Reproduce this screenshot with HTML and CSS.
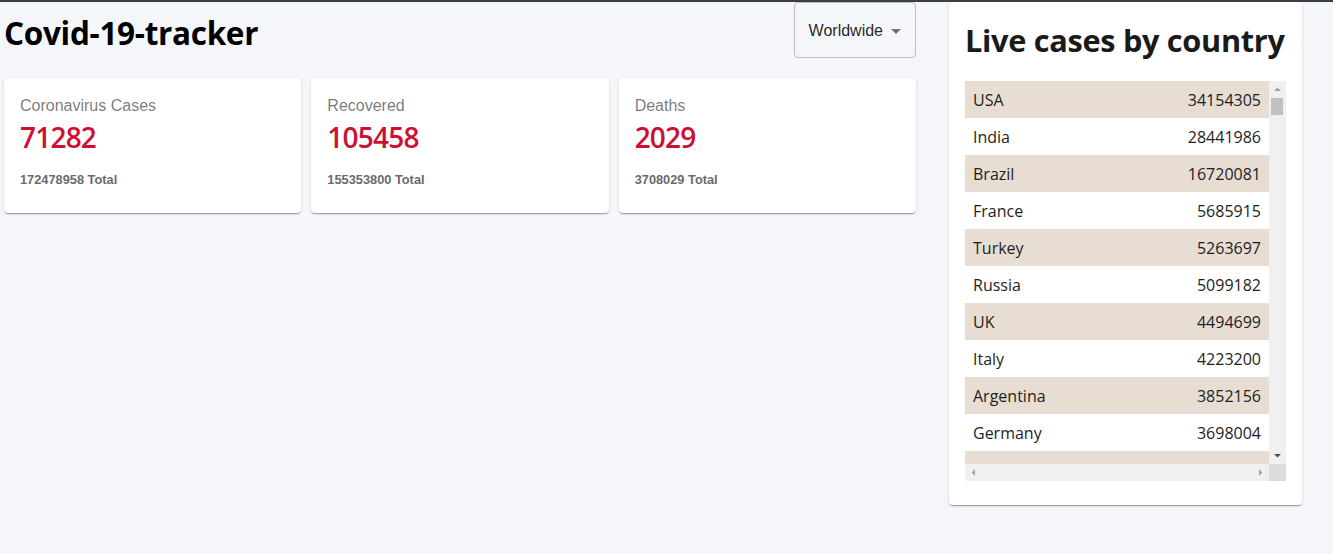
FILE: index.html
```html
<!DOCTYPE html>
<html lang="en">
<head>
<meta charset="utf-8">
<title>Covid-19-tracker</title>
<link rel="stylesheet" href="styles.css">
</head>
<body>
<div class="app">
  <div class="app-left">
    <div class="header">
      <h1 class="app-title">Covid-19-tracker</h1>
      <div class="select">
        <span class="select-value">Worldwide</span>
        <svg class="select-icon" viewBox="0 0 24 24" width="24" height="24"><path d="M7 10l5 5 5-5z"/></svg>
      </div>
    </div>
    <div class="stats">
      <div class="card info-box">
        <div class="info-title">Coronavirus Cases</div>
        <h2 class="info-cases">71282</h2>
        <div class="info-total">172478958 Total</div>
      </div>
      <div class="card info-box">
        <div class="info-title">Recovered</div>
        <h2 class="info-cases">105458</h2>
        <div class="info-total">155353800 Total</div>
      </div>
      <div class="card info-box">
        <div class="info-title">Deaths</div>
        <h2 class="info-cases">2029</h2>
        <div class="info-total">3708029 Total</div>
      </div>
    </div>
  </div>
  <div class="card app-right">
    <h3 class="right-title">Live cases by country</h3>
    <div class="table-wrap">
      <div class="table-view">
        <table class="table">
          <tbody>
            <tr><td>USA</td><td>34154305</td></tr>
            <tr><td>India</td><td>28441986</td></tr>
            <tr><td>Brazil</td><td>16720081</td></tr>
            <tr><td>France</td><td>5685915</td></tr>
            <tr><td>Turkey</td><td>5263697</td></tr>
            <tr><td>Russia</td><td>5099182</td></tr>
            <tr><td>UK</td><td>4494699</td></tr>
            <tr><td>Italy</td><td>4223200</td></tr>
            <tr><td>Argentina</td><td>3852156</td></tr>
            <tr><td>Germany</td><td>3698004</td></tr>
            <tr><td>Spain</td><td>3697980</td></tr>
            <tr><td>Colombia</td><td>3518046</td></tr>
          </tbody>
        </table>
      </div>
      <div class="vbar">
        <div class="sb-btn"><svg width="17" height="17" viewBox="0 0 17 17"><path d="M5 10h7L8.5 6.5z" fill="#a3a3a3"/></svg></div>
        <div class="vbar-track"><div class="vbar-thumb"></div></div>
        <div class="sb-btn"><svg width="17" height="17" viewBox="0 0 17 17"><path d="M5 7h7L8.5 10.5z" fill="#505050"/></svg></div>
      </div>
      <div class="hbar">
        <div class="sb-btn"><svg width="17" height="17" viewBox="0 0 17 17"><path d="M10 5v7L6.5 8.5z" fill="#a3a3a3"/></svg></div>
        <div class="hbar-track"></div>
        <div class="sb-btn"><svg width="17" height="17" viewBox="0 0 17 17"><path d="M7 5v7L10.5 8.5z" fill="#a3a3a3"/></svg></div>
      </div>
      <div class="sb-corner"></div>
    </div>
  </div>
</div>
</body>
</html>
```

FILE: styles.css
```css
* { box-sizing: border-box; }

html, body {
  margin: 0;
  height: 100%;
}

body {
  background: #f5f6fa;
  border-top: 2px solid #3a3f44;
  font-family: "Open Sans", "Noto Sans", sans-serif;
  overflow: hidden;
}

.app {
  display: flex;
  align-items: flex-start;
  gap: 33px;
  padding: 0 31px 0 4px;
}

.app-left {
  flex: 0 0 912px;
  min-width: 0;
}

.header {
  display: flex;
  justify-content: space-between;
  align-items: center;
  height: 56px;
  margin-bottom: 20px;
}

.app-title {
  margin: 0;
  font-size: 31.5px;
  font-weight: 700;
  letter-spacing: -0.3px;
  color: #000;
  line-height: 40px;
  padding-top: 5px;
}

.select {
  position: relative;
  display: flex;
  align-items: center;
  height: 56px;
  padding: 1px 32px 0 14px;
  border: 1px solid rgba(0, 0, 0, 0.23);
  border-radius: 4px;
  font-family: "Liberation Sans", Arial, sans-serif;
  font-size: 16px;
  color: rgba(0, 0, 0, 0.87);
}

.select-icon {
  position: absolute;
  right: 7px;
  top: 16px;
  fill: rgba(0, 0, 0, 0.54);
}

.stats {
  display: flex;
  gap: 10px;
}

.card {
  background: #fff;
  border-radius: 4px;
  box-shadow: 0 2px 1px -1px rgba(0, 0, 0, 0.2), 0 1px 1px 0 rgba(0, 0, 0, 0.14), 0 1px 3px 0 rgba(0, 0, 0, 0.12);
}

.info-box {
  flex: 1;
  padding: 16px 16px 24px;
}

.info-title {
  font-family: "Liberation Sans", Arial, sans-serif;
  font-size: 16px;
  line-height: 24px;
  color: rgba(0, 0, 0, 0.54);
}

.info-cases {
  margin: 1px 0 8px;
  font-size: 28px;
  line-height: 37px;
  font-weight: 600;
  letter-spacing: -0.8px;
  color: #cc1034;
}

.info-total {
  margin-top: 15px;
  font-family: "Liberation Sans", Arial, sans-serif;
  font-size: 12.8px;
  line-height: 18px;
  font-weight: 700;
  color: #6b6b6b;
}

.app-right {
  flex: 0 0 353px;
  min-width: 0;
  padding: 18px 16px 24px;
}

.right-title {
  margin: 1px 0 5px;
  font-size: 30.7px;
  line-height: 38px;
  font-weight: 700;
  letter-spacing: -0.3px;
  color: #1a1a1a;
  white-space: nowrap;
}

.table-wrap {
  margin-top: 22px;
  height: 400px;
  display: grid;
  grid-template-columns: 1fr 17px;
  grid-template-rows: 1fr 17px;
}

.table-view {
  overflow: hidden;
  min-height: 0;
}

.table {
  width: 100%;
  border-collapse: collapse;
  font-size: 16px;
  color: #1e1e1e;
}

.table tr {
  display: flex;
  justify-content: space-between;
}

.table tr:nth-of-type(odd) {
  background: #e7ddd2;
}

.table td {
  padding: 9px 8px 7px;
  line-height: 21px;
}

.vbar {
  display: flex;
  flex-direction: column;
  background: #f0f0f0;
}

.vbar-track {
  flex: 1;
}

.vbar-thumb {
  height: 17px;
  margin: 0 3px 0 2px;
  background: #c1c1c1;
}

.hbar {
  display: flex;
  background: #f0f0f0;
}

.hbar-track {
  flex: 1;
}

.sb-btn {
  flex: 0 0 17px;
  width: 17px;
  height: 17px;
}

.sb-btn svg {
  display: block;
}

.sb-corner {
  background: #dcdcdc;
}
```
